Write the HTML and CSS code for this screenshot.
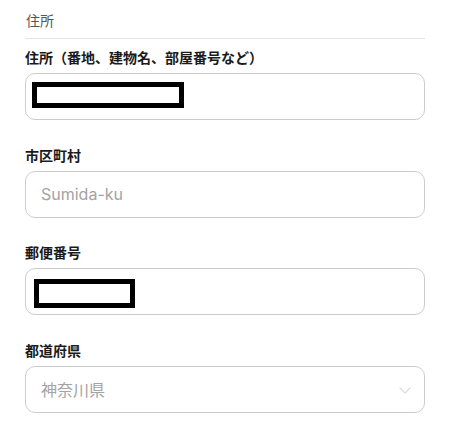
FILE: index.html
```html
<!DOCTYPE html>
<html lang="ja">
<head>
<meta charset="utf-8">
<title>住所</title>
<link rel="stylesheet" href="styles.css">
</head>
<body>
<main class="form">
  <h2 class="section-title">住所</h2>
  <div class="fields">
    <div class="field">
      <label class="label">住所（番地、建物名、部屋番号など）</label>
      <div class="control">
        <span class="redact redact-address"></span>
      </div>
    </div>
    <div class="field">
      <label class="label" for="city">市区町村</label>
      <input class="control text-input" id="city" type="text" placeholder="Sumida-ku">
    </div>
    <div class="field">
      <label class="label">郵便番号</label>
      <div class="control">
        <span class="redact redact-zip"></span>
      </div>
    </div>
    <div class="field">
      <label class="label">都道府県</label>
      <div class="control select">
        <span class="select-value">神奈川県</span>
        <svg class="chevron" width="12" height="7" viewBox="0 0 12 7" aria-hidden="true">
          <path d="M1 1 L6 6 L11 1" fill="none" stroke="#dcdcdc" stroke-width="1.2" stroke-linecap="round" stroke-linejoin="round"/>
        </svg>
      </div>
    </div>
  </div>
</main>
</body>
</html>
```
FILE: styles.css
```css
* {
  box-sizing: border-box;
}

html, body {
  margin: 0;
  padding: 0;
  background: #ffffff;
}

body {
  font-family: Inter, "Noto Sans CJK JP", sans-serif;
  color: #1a1a1a;
}

.form {
  width: 400px;
  margin-left: 25px;
  padding-top: 11px;
}

.section-title {
  margin: 0;
  font-size: 14px;
  line-height: 20px;
  font-weight: 400;
  color: #555555;
  padding-left: 1px;
  padding-bottom: 7px;
  border-bottom: 1px solid #e3e3e3;
}

.fields {
  display: flex;
  flex-direction: column;
  gap: 25.7px;
  padding-top: 9px;
}

.field {
  display: flex;
  flex-direction: column;
}

.label {
  display: block;
  font-size: 14px;
  line-height: 20px;
  font-weight: 700;
  color: #1a1a1a;
  margin-bottom: 5px;
}

.control {
  display: flex;
  align-items: flex-start;
  width: 400px;
  height: 47px;
  border: 1px solid #cccccc;
  border-radius: 10px;
  background: #ffffff;
}

.text-input {
  align-items: center;
  margin: 0;
  padding: 0 15px;
  font-family: Inter, "Noto Sans CJK JP", sans-serif;
  font-size: 16px;
  color: #1a1a1a;
  outline: none;
}

.text-input::placeholder {
  color: #a3a3a3;
  opacity: 1;
}

.redact {
  display: block;
  border: 5px solid #000000;
  background: #ffffff;
}

.redact-address {
  width: 152px;
  height: 26px;
  margin: 8px 0 0 6px;
}

.redact-zip {
  width: 101px;
  height: 29px;
  margin: 10px 0 0 8px;
}

.select {
  align-items: center;
  justify-content: space-between;
  padding: 0 13px 0 15px;
}

.select-value {
  font-size: 16px;
  line-height: 22px;
  color: #a3a3a3;
}

.chevron {
  display: block;
  margin-top: 2px;
}
```
